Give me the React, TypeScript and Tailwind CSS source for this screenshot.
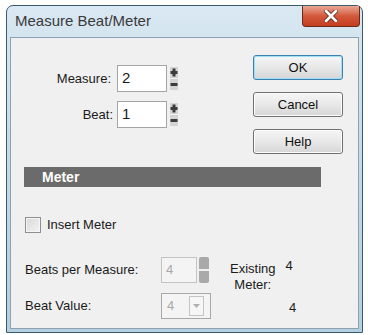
import React from 'react';

const font = { fontFamily: '"Liberation Sans", Arial, sans-serif' };

function Spinner() {
  return (
    <div className="ml-[3px] flex h-[25px] w-[8px] flex-col items-center justify-between py-[1px]">
      <svg width="8" height="11" viewBox="0 0 8 11">
        <rect x="0" y="0" width="8" height="11" fill="#d4d4d4" />
        <rect x="0.5" y="4" width="7" height="3" fill="#3c3c3c" />
        <rect x="2.5" y="1.5" width="3" height="8" fill="#3c3c3c" />
      </svg>
      <svg width="8" height="11" viewBox="0 0 8 11">
        <rect x="0" y="0" width="8" height="11" fill="#d4d4d4" />
        <rect x="0.5" y="4" width="7" height="3" fill="#3c3c3c" />
      </svg>
    </div>
  );
}

function DialogButton({ label, focused }: { label: string; focused?: boolean }) {
  return (
    <div
      className={
        'flex h-[25px] w-[90px] items-center justify-center rounded-[3px] border text-[13px] text-[#111] bg-gradient-to-b from-[#f6f6f6] via-[#e8e8e8] to-[#d6d6d6] ' +
        (focused ? 'border-[#3c7fb1] shadow-[inset_0_0_0_1px_#9fe0f5]' : 'border-[#707070] shadow-[inset_0_0_0_1px_#fcfcfc]')
      }
    >
      {label}
    </div>
  );
}

export default function App() {
  return (
    <div className="h-[335px] w-[368px] overflow-hidden bg-white pl-[6px] pt-[5px]" style={font}>
      <div className="flex h-[328px] w-[357px] flex-col rounded-t-[7px] border border-[#3b5a6e] bg-gradient-to-b from-[#d9e8f2] via-[#c2d9e8] to-[#b4cfe0]">
        {/* Title bar */}
        <div className="relative flex h-[31px] shrink-0 items-center pl-[8px]">
          <span className="text-[15px] text-[#3a3a3a]">Measure Beat/Meter</span>
          <div className="absolute right-[2px] top-[0px] flex h-[21px] w-[58px] items-center justify-center rounded-b-[4px] border border-t-0 border-[#6b2a1c] bg-gradient-to-b from-[#e9a894] via-[#d2583c] to-[#c43c1e]">
            <svg width="14" height="12" viewBox="0 0 14 12">
              <path d="M2 1 L12 11 M12 1 L2 11" stroke="#5a2418" strokeWidth="4.4" strokeLinecap="round" />
              <path d="M2 1 L12 11 M12 1 L2 11" stroke="#ffffff" strokeWidth="2.8" strokeLinecap="round" />
            </svg>
          </div>
        </div>

        {/* Client area */}
        <div className="mx-[3px] mb-[3px] flex flex-1 flex-col border border-[#8aa2b1] bg-[#f0f0f0] text-[13px] text-[#1a1a1a]">
          {/* Top section */}
          <div className="flex h-[129px]">
            <div className="flex w-[242px] flex-col pt-[27px]">
              <div className="flex items-center">
                <span className="w-[100px] text-right">Measure:</span>
                <div className="ml-[6px] flex h-[27px] w-[50px] items-center border border-[#a5a5a5] bg-white pl-[4px] text-[15px]">2</div>
                <Spinner />
              </div>
              <div className="mt-[9px] flex items-center">
                <span className="w-[102px] text-right">Beat:</span>
                <div className="ml-[4px] flex h-[27px] w-[50px] items-center border border-[#a5a5a5] bg-white pl-[4px] text-[15px]">1</div>
                <Spinner />
              </div>
            </div>
            <div className="flex flex-col gap-[12px] pt-[17px]">
              <DialogButton label="OK" focused />
              <DialogButton label="Cancel" />
              <DialogButton label="Help" />
            </div>
          </div>

          {/* Meter header */}
          <div className="ml-[13px] flex h-[20px] w-[297px] items-center bg-[#6b6b6b] pl-[18px] text-[14px] font-bold text-white">
            Meter
          </div>

          {/* Insert meter */}
          <div className="ml-[14px] mt-[28px] flex items-center">
            <div className="h-[16px] w-[16px] border border-[#8e8f8f] bg-gradient-to-br from-[#d8d8d8] to-[#f4f4f4] shadow-[inset_0_0_0_1px_#f6f6f6]" />
            <span className="ml-[6px]">Insert Meter</span>
          </div>

          {/* Bottom section */}
          <div className="mt-[22px] flex">
            <div className="ml-[14px] flex flex-col">
              <div className="flex items-center">
                <span className="w-[136px]">Beats per Measure:</span>
                <div className="flex h-[26px] w-[36px] items-center border border-[#c4c4c4] bg-[#f4f4f4] pl-[4px] text-[#a8a8a8]">4</div>
                <div className="ml-[2px] flex h-[26px] w-[10px] flex-col gap-[2px]">
                  <div className="flex-1 rounded-t-[2px] bg-[#a9a9a9]" />
                  <div className="flex-1 rounded-b-[2px] bg-[#a9a9a9]" />
                </div>
              </div>
              <div className="mt-[10px] flex items-center">
                <span className="w-[136px]">Beat Value:</span>
                <div className="flex h-[26px] w-[50px] items-center justify-between border border-[#a8a8a8] bg-[#f4f4f4] pl-[5px] pr-[6px] text-[#a8a8a8]">
                  <span>4</span>
                  <div className="flex h-[20px] w-[15px] items-center justify-center border border-[#c4c4c4] bg-[#f6f6f6]">
                    <svg width="7" height="4" viewBox="0 0 7 4">
                      <path d="M0 0 L7 0 L3.5 4 Z" fill="#b0b0b0" />
                    </svg>
                  </div>
                </div>
              </div>
            </div>
            <div className="ml-[19px] flex flex-col pt-[4px]">
              <div className="flex">
                <div className="text-center leading-[16px]">
                  Existing
                  <br />
                  Meter:
                </div>
                <span className="ml-[10px] -mt-[3px] leading-[16px]">4</span>
              </div>
              <span className="mt-[7px] pl-[59px] leading-[16px]">4</span>
            </div>
          </div>
        </div>
      </div>
    </div>
  );
}
